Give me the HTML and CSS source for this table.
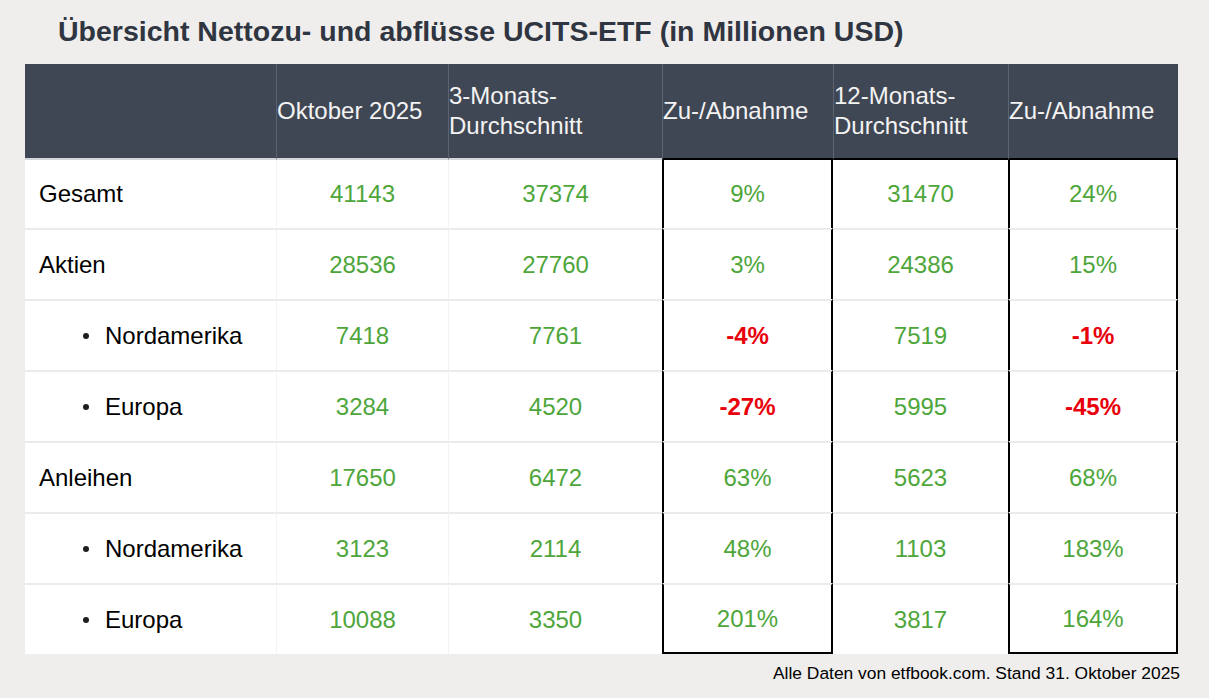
FILE: index.html
```html
<!DOCTYPE html>
<html lang="de">
<head>
<meta charset="utf-8">
<title>Übersicht Nettozu- und abflüsse UCITS-ETF</title>
<link rel="stylesheet" href="styles.css">
</head>
<body>
<main class="page">
  <h1 class="title">Übersicht Nettozu- und abflüsse UCITS-ETF (in Millionen USD)</h1>
  <table class="flows">
    <colgroup>
      <col class="c-label">
      <col class="c-okt">
      <col class="c-3m">
      <col class="c-d1">
      <col class="c-12m">
      <col class="c-d2">
    </colgroup>
    <thead>
      <tr>
        <th></th>
        <th class="sep">Oktober 2025</th>
        <th class="sep">3-Monats-<br>Durchschnitt</th>
        <th class="sep dark">Zu-/Abnahme</th>
        <th class="sep dark">12-Monats-<br>Durchschnitt</th>
        <th class="sep dark">Zu-/Abnahme</th>
      </tr>
    </thead>
    <tbody>
      <tr>
        <td class="label">Gesamt</td>
        <td class="num faint">41143</td>
        <td class="num faint">37374</td>
        <td class="num boxed">9%</td>
        <td class="num">31470</td>
        <td class="num boxed">24%</td>
      </tr>
      <tr>
        <td class="label">Aktien</td>
        <td class="num faint">28536</td>
        <td class="num faint">27760</td>
        <td class="num boxed">3%</td>
        <td class="num">24386</td>
        <td class="num boxed">15%</td>
      </tr>
      <tr>
        <td class="label sub"><span class="dot"></span>Nordamerika</td>
        <td class="num faint">7418</td>
        <td class="num faint">7761</td>
        <td class="num boxed neg">-4%</td>
        <td class="num">7519</td>
        <td class="num boxed neg">-1%</td>
      </tr>
      <tr>
        <td class="label sub"><span class="dot"></span>Europa</td>
        <td class="num faint">3284</td>
        <td class="num faint">4520</td>
        <td class="num boxed neg">-27%</td>
        <td class="num">5995</td>
        <td class="num boxed neg">-45%</td>
      </tr>
      <tr>
        <td class="label">Anleihen</td>
        <td class="num faint">17650</td>
        <td class="num faint">6472</td>
        <td class="num boxed">63%</td>
        <td class="num">5623</td>
        <td class="num boxed">68%</td>
      </tr>
      <tr>
        <td class="label sub"><span class="dot"></span>Nordamerika</td>
        <td class="num faint">3123</td>
        <td class="num faint">2114</td>
        <td class="num boxed">48%</td>
        <td class="num">1103</td>
        <td class="num boxed">183%</td>
      </tr>
      <tr class="last">
        <td class="label sub"><span class="dot"></span>Europa</td>
        <td class="num faint">10088</td>
        <td class="num faint">3350</td>
        <td class="num boxed">201%</td>
        <td class="num">3817</td>
        <td class="num boxed">164%</td>
      </tr>
    </tbody>
  </table>
  <p class="source">Alle Daten von etfbook.com. Stand 31. Oktober 2025</p>
</main>
</body>
</html>
```

FILE: styles.css
```css
html, body {
  margin: 0;
  padding: 0;
  background: #efeeec;
}

body {
  font-family: "Liberation Sans", Arial, sans-serif;
  color: #000;
}

.page {
  width: 1153px;
  padding: 14px 0 0 25px;
}

.title {
  margin: 0 0 16px 33px;
  font-size: 28.5px;
  line-height: 34px;
  font-weight: bold;
  color: #2f3541;
}

.flows {
  width: 1153px;
  table-layout: fixed;
  border-collapse: separate;
  border-spacing: 0;
  background: #fff;
  font-size: 24px;
}

.c-label { width: 251px; }
.c-okt { width: 172px; }
.c-3m { width: 214px; }
.c-d1 { width: 171px; }
.c-12m { width: 175px; }
.c-d2 { width: 170px; }

.flows th {
  height: 96px;
  box-sizing: border-box;
  padding: 0;
  background: #404754;
  color: #f3f3f3;
  font-weight: normal;
  text-align: left;
  vertical-align: middle;
  line-height: 30px;
  border-bottom: 2px solid #d3d6da;
}

.flows th.sep {
  border-left: 1px solid #5c636e;
}

.flows th.dark {
  border-bottom-color: #000;
}

.flows td {
  height: 71px;
  box-sizing: border-box;
  padding: 0;
  vertical-align: middle;
  line-height: 28px;
  border-top: 2px solid #ebebeb;
}

.flows tbody tr:first-child td {
  border-top: 0;
  height: 68px;
}

.flows td.label {
  padding-left: 14px;
  color: #000;
}

.flows td.sub {
  padding-left: 57px;
}

.dot {
  display: inline-block;
  width: 6px;
  height: 6px;
  border-radius: 50%;
  background: #1e1e1e;
  vertical-align: middle;
  margin: 0 16px 3px 1px;
}

.flows td.num {
  text-align: center;
  color: #4ea63b;
}

.flows td.faint {
  border-left: 1px solid #f3f3f3;
}

.flows td.boxed {
  border-left: 2px solid #000;
  border-right: 2px solid #000;
}

.flows td.neg {
  color: #e8000b;
  font-weight: bold;
}

.flows tr.last td.boxed {
  border-bottom: 2px solid #000;
}

.source {
  margin: 0;
  padding-top: 8px;
  text-align: right;
  font-size: 17.4px;
  line-height: 22px;
  width: 1155px;
  color: #000;
}
```
